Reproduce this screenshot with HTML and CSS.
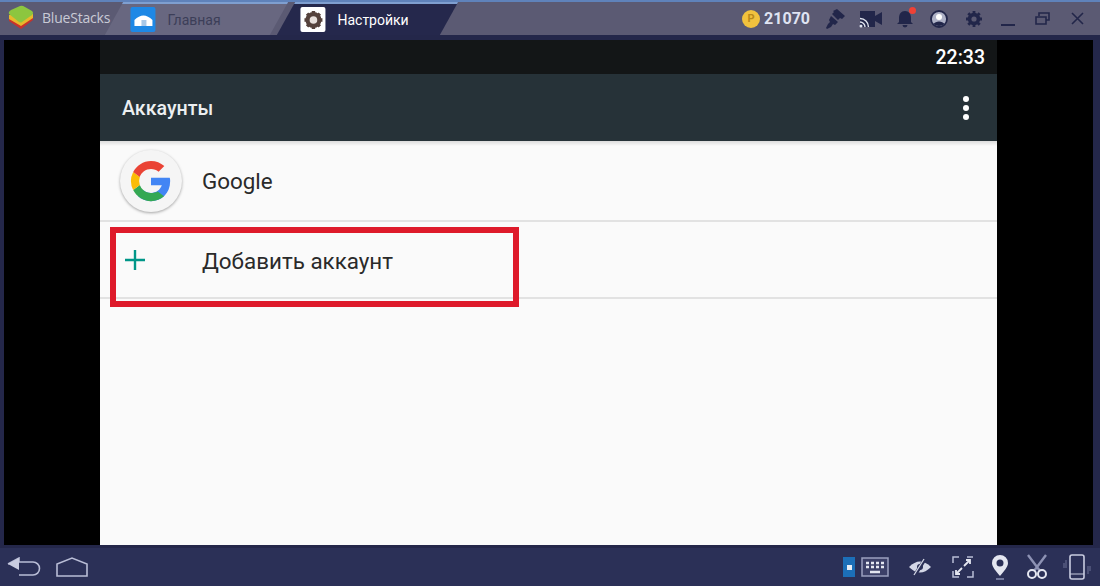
FILE: index.html
```html
<!DOCTYPE html>
<html lang="ru">
<head>
    <meta charset="UTF-8">
    <title>BlueStacks - Настройки</title>
    <link rel="stylesheet" href="styles.css">
</head>
<body>
    <div class="window">
        <!-- Шапка окна -->
        <header class="titlebar">
            <div class="brand">
                <svg class="brand-logo" width="28" height="26" viewBox="0 0 28 26">
                    <path d="M2 13 L2 17 L14 25 L26 16 L26 12 Z" fill="#c8332b"/>
                    <path d="M2 11 L2 15 L14 22 L26 14 L26 10 Z" fill="#e8b92c"/>
                    <path d="M2 10 Q1 8 4 6 L13 2 Q15 1 18 3 L25 7 Q27 9 25 11 L15 18 Q14 19 12 18 Z" fill="#8cc63f"/>
                </svg>
                <span class="brand-name">BlueStacks</span>
            </div>
            <div class="tab">
                <div class="tab-inner">
                    <span class="tab-icon tab-icon-home">
                        <svg width="24" height="24" viewBox="0 0 24 24">
                            <path d="M3 12 Q12 3 21 12 L21 18 L3 18 Z" fill="#fff"/>
                            <rect x="10" y="12" width="5" height="6" fill="#a8c8e8"/>
                        </svg>
                    </span>
                    <span class="tab-label">Главная</span>
                </div>
            </div>
            <div class="tab tab-active">
                <div class="tab-inner">
                    <span class="tab-icon tab-icon-gear">
                        <svg width="20" height="20" viewBox="0 0 20 20">
                            <circle cx="10" cy="10" r="6" fill="none" stroke="#55423c" stroke-width="4"/>
                            <path d="M10 1v18M1 10h18M3.600 3.600l12.800 12.800M16.400 3.600L3.600 16.400" stroke="#55423c" stroke-width="3.400"/>
                            <circle cx="10" cy="10" r="3.800" fill="#e8e0dc"/>
                        </svg>
                    </span>
                    <span class="tab-label">Настройки</span>
                </div>
            </div>
            <div class="toolbar">
                <span class="coin">P</span>
                <span class="coins">21070</span>
                <svg class="tool tool-brush" width="20" height="20" viewBox="0 0 20 20"><path d="M12 0l8 7-3 3-2-1-2 2-6-6 2-2-1-1zM6 7l7 6-3 3-2-1-2 3-4 2-1-1 2-4 2-2-1-2z" fill="#22264a"/></svg>
                <svg class="tool tool-cam" width="24" height="18" viewBox="0 0 24 18"><path d="M1 1h15v5l7-4v13l-7-4v6H1z" fill="#22264a"/><path d="M1 12a5 5 0 0 1 5 5M1 8.500a8.500 8.500 0 0 1 8.500 8.500" fill="none" stroke="#dfe3ee" stroke-width="1.400"/><circle cx="2" cy="16" r="1.500" fill="#dfe3ee"/></svg>
                <span class="bell">
                    <svg width="18" height="20" viewBox="0 0 18 20"><path d="M9 2c4 0 6 3 6 7v4l2 2H1l2-2V9c0-4 2-7 6-7zM6.500 16h5a2.500 2.500 0 0 1-5 0z" fill="#22264a"/></svg>
                    <i class="bell-dot"></i>
                </span>
                <svg class="tool tool-user" width="18" height="18" viewBox="0 0 18 18"><circle cx="9" cy="9" r="8" fill="#aeb1c6" stroke="#22264a" stroke-width="1.800"/><circle cx="9" cy="7" r="3" fill="#fff"/><path d="M3.500 14c2-3.500 9-3.500 11 0-3 2.500-8 2.500-11 0z" fill="#22264a"/></svg>
                <svg class="tool tool-gear" width="18" height="18" viewBox="0 0 18 18"><circle cx="9" cy="9" r="4.500" fill="none" stroke="#22264a" stroke-width="3.500"/><path d="M9 1v16M1 9h16M3.300 3.300l11.400 11.400M14.700 3.300L3.300 14.700" stroke="#22264a" stroke-width="2.800"/><circle cx="9" cy="9" r="2.600" fill="#5b5a73"/></svg>
                <svg class="tool tool-min" width="14" height="18" viewBox="0 0 14 18"><path d="M0 15h14" stroke="#22264a" stroke-width="2"/></svg>
                <svg class="tool tool-restore" width="15" height="13" viewBox="0 0 15 13"><path d="M4 4V1h10v7h-3M1 5h10v7H1z" fill="none" stroke="#22264a" stroke-width="1.600"/></svg>
                <svg class="tool tool-close" width="13" height="13" viewBox="0 0 13 13"><path d="M1 1l11 11M12 1L1 12" stroke="#22264a" stroke-width="1.600"/></svg>
            </div>
        </header>

        <!-- Экран -->
        <main class="screen">
            <div class="app">
                <div class="statusbar"><span class="clock">22:33</span></div>
                <div class="appbar">
                    <h1 class="appbar-title">Аккаунты</h1>
                    <div class="menu-dots"><i></i><i></i><i></i></div>
                </div>
                <div class="list">
                    <div class="row row-google">
                        <span class="avatar">
                            <svg width="46" height="46" viewBox="0 0 48 48">
                                <path d="M43.600 20.500H24v8h11.300C33.700 33.200 29.300 36.500 24 36.500c-3 0-5.700-1.100-7.800-2.900l-6 6C14 43.100 18.700 45 24 45c11 0 20-8 20-21 0-1.200-.1-2.400-.4-3.500z" fill="#4285f4"/>
                                <path d="M16.200 33.600A12.500 12.500 0 0 1 12.300 28.100l-6.900 5.300C8.800 40 15.900 45 24 45c5.300 0 10-1.800 13.600-5l-6.500-5.100c-2 1-4.400 1.600-7.100 1.600-3 0-5.700-1.100-7.800-2.900z" fill="#34a853"/>
                                <path d="M12.300 28.100A12.500 12.500 0 0 1 12.300 19.900l-6.900-5.300a21 21 0 0 0 0 18.800z" fill="#fbbc05"/>
                                <path d="M5.400 14.600l6.900 5.300C13.900 15 18.500 11.500 24 11.500c3 0 5.800 1.100 7.900 2.900l6-6C34 5 29.300 3 24 3 15.900 3 8.800 8 5.400 14.600z" fill="#ea4335"/>
                            </svg>
                        </span>
                        <span class="row-text">Google</span>
                    </div>
                    <div class="row row-add">
                        <svg class="plus" width="22" height="22" viewBox="0 0 22 22"><path d="M11 1v20M1 11h20" stroke="#009688" stroke-width="2.400"/></svg>
                        <span class="row-text">Добавить аккаунт</span>
                    </div>
                </div>
                <div class="highlight"></div>
            </div>
        </main>

        <!-- Нижняя панель -->
        <footer class="navbar">
            <div class="nav-left">
                <svg width="34" height="20" viewBox="0 0 34 20"><path d="M1 7l11-6v4h14a6.500 6.500 0 0 1 0 13H12" fill="none" stroke="#b9bdd6" stroke-width="1.600"/><path d="M1 7l11-6v12z" fill="#c9cce0"/></svg>
                <svg width="32" height="20" viewBox="0 0 32 20"><path d="M1 19V7L16 1l15 6v12z" fill="none" stroke="#b9bdd6" stroke-width="1.600"/></svg>
            </div>
            <div class="nav-right">
                <span class="kbd-lang"><i></i></span>
                <svg class="kbd" width="28" height="20" viewBox="0 0 28 20"><rect x="1" y="1" width="26" height="18" fill="#3c4068" stroke="#9a9fbe" stroke-width="1.500"/><path d="M5 6h3M10 6h3M15 6h3M20 6h3M5 10h3M10 10h3M15 10h3M20 10h3M9 15h10" stroke="#e4e6f0" stroke-width="2.500"/></svg>
                <svg class="nav-wide" width="24" height="18" viewBox="0 0 24 18"><path d="M1 9q11-11 22 0q-11 11-22 0z" fill="#d4d7e6"/><circle cx="12" cy="9" r="3" fill="#2b3057"/><path d="M17 1L7 17" stroke="#2b3057" stroke-width="3.500"/><path d="M16 1L6 17" stroke="#d4d7e6" stroke-width="1.300"/></svg>
                <svg class="nav-wide" width="24" height="24" viewBox="0 0 24 24"><path d="M8 2H2v6M16 2h6M2 16v6h6M22 16v6h-6" fill="none" stroke="#b9bdd6" stroke-width="1.500"/><path d="M13 11l6-6M15 5h4v4M11 13l-6 6M9 19H5v-4" fill="none" stroke="#e4e6f0" stroke-width="1.800"/></svg>
                <svg class="nav-tight" width="18" height="26" viewBox="0 0 18 26"><path fill-rule="evenodd" d="M9 1a8 8 0 0 1 8 8c0 4-4 8-8 13-4-5-8-9-8-13a8 8 0 0 1 8-8zm0 4.500a3.500 3.500 0 1 0 0 7 3.500 3.500 0 0 0 0-7z" fill="#e4e6f0"/><path d="M5 25h8" stroke="#8d92b4" stroke-width="1.500"/></svg>
                <svg width="22" height="26" viewBox="0 0 22 26"><path d="M2 1l12 16M20 1L8 17" stroke="#8d92b4" stroke-width="2.400"/><circle cx="6" cy="20" r="4" fill="none" stroke="#e4e6f0" stroke-width="2"/><circle cx="16" cy="20" r="4" fill="none" stroke="#e4e6f0" stroke-width="2"/></svg>
                <svg class="nav-phone" width="28" height="28" viewBox="0 0 28 28"><rect x="7" y="2" width="14" height="24" rx="2" fill="none" stroke="#c9cce0" stroke-width="1.600"/><path d="M7 21h14" stroke="#c9cce0" stroke-width="1"/><path d="M3 7v8M25 13v8M1 10v5M27 13v5" stroke="#6d7196" stroke-width="1"/></svg>
            </div>
        </footer>
    </div>
</body>
</html>
```

FILE: styles.css
```css
* {
    margin: 0;
    padding: 0;
    box-sizing: border-box;
}

body {
    width: 1100px;
    height: 586px;
    overflow: hidden;
    background: #2b3057;
    font-family: 'Roboto', 'Liberation Sans', sans-serif;
}

.window {
    display: flex;
    flex-direction: column;
    height: 586px;
}

/* Шапка окна */
.titlebar {
    height: 40px;
    flex: none;
    display: flex;
    align-items: flex-start;
    background: #5b5a73;
    border-top: 2px solid #5f82ba;
    border-bottom: 5px solid #24274a;
    color: #fff;
}

.brand {
    width: 114px;
    height: 33px;
    flex: none;
    display: flex;
    align-items: center;
    padding: 0 0 3px 7px;
    gap: 7px;
}

.brand-logo {
    flex: none;
}

.brand-name {
    font-family: 'Open Sans', sans-serif;
    font-size: 14px;
    color: #c9cad6;
    letter-spacing: -.2px;
    white-space: nowrap;
}

.tab {
    width: 165px;
    height: 33px;
    flex: none;
    transform: skewX(-29deg);
    background: #686780;
    border-top: 2px solid #7f9fd0;
}

.tab-active {
    margin-left: 7px;
    width: 163px;
    background: #25284c;
}

.tab-inner {
    height: 100%;
    display: flex;
    align-items: center;
    padding-left: 17px;
    gap: 12px;
    transform: skewX(29deg);
}

.tab-active .tab-inner {
    padding-left: 15px;
}

.tab-icon {
    width: 25px;
    height: 25px;
    border-radius: 2px;
    display: flex;
    align-items: center;
    justify-content: center;
    flex: none;
}

.tab-icon-home {
    background: #1e88e5;
}

.tab-icon-gear {
    background: #fff;
}

.tab-label {
    font-size: 14px;
    color: #3c3e58;
}

.tab-active .tab-label {
    color: #fff;
}

.toolbar {
    margin-left: auto;
    height: 33px;
    display: flex;
    align-items: center;
    padding-right: 16px;
}

.coin {
    width: 18px;
    height: 18px;
    border-radius: 50%;
    background: #f2c23e;
    color: #b98a1a;
    font-size: 11px;
    font-weight: 700;
    text-align: center;
    line-height: 18px;
}

.coins {
    margin-left: 4px;
    font-size: 16px;
    font-weight: 700;
    color: #dfe3f2;
}

.tool {
    flex: none;
}

.tool-brush {
    margin-left: 15px;
}

.tool-cam {
    margin-left: 14px;
}

.bell {
    position: relative;
    display: flex;
    margin-left: 13px;
}

.bell-dot {
    position: absolute;
    top: -2px;
    right: -2px;
    width: 7px;
    height: 7px;
    border-radius: 50%;
    background: #ef4136;
}

.tool-user {
    margin-left: 16px;
}

.tool-gear {
    margin-left: 17px;
}

.tool-min {
    margin-left: 18px;
}

.tool-restore {
    margin-left: 20px;
}

.tool-close {
    margin-left: 21px;
}

/* Экран */
.screen {
    flex: 1;
    padding: 0 7px 3px 4px;
    background: #24274a;
}

.app {
    position: relative;
    height: 100%;
    background: #000;
    padding: 0 96px;
    display: flex;
    flex-direction: column;
}

.statusbar {
    height: 34px;
    flex: none;
    display: flex;
    align-items: center;
    justify-content: flex-end;
    padding-right: 12px;
    background: #131617;
}

.clock {
    font-size: 19.500px;
    font-weight: 500;
    color: #fff;
}

.appbar {
    height: 67px;
    flex: none;
    display: flex;
    align-items: center;
    justify-content: space-between;
    padding: 0 28px 0 22px;
    background: #263238;
}

.appbar-title {
    padding-top: 2px;
    font-size: 19.600px;
    font-weight: 500;
    color: #eceff1;
}

.menu-dots {
    display: flex;
    flex-direction: column;
    gap: 3px;
}

.menu-dots i {
    width: 6px;
    height: 6px;
    border-radius: 50%;
    background: #fff;
}

.list {
    flex: 1;
    background: linear-gradient(#dcdcdc, #fafafa 5px);
}

.row {
    display: flex;
    align-items: center;
    border-bottom: 2px solid #e2e2e2;
}

.row-google {
    height: 81px;
    padding-left: 20px;
}

.row-add {
    height: 77px;
    padding: 2px 0 0 24px;
}

.avatar {
    width: 62px;
    height: 62px;
    margin-right: 20px;
    border-radius: 50%;
    background: #f5f5f5;
    box-shadow: 0 1px 3px rgba(0,0,0,0.35);
    display: flex;
    align-items: center;
    justify-content: center;
}

.plus {
    margin: -2px 56px 0 0;
}

.row-text {
    font-size: 22.400px;
    color: #2a2a2a;
}

/* Красная рамка поверх списка */
.highlight {
    position: absolute;
    left: 106px;
    top: 187px;
    width: 409px;
    height: 80px;
    border: 6px solid #de1a2a;
}

/* Нижняя панель */
.navbar {
    height: 38px;
    flex: none;
    display: flex;
    align-items: center;
    justify-content: space-between;
    background: #2b3057;
}

.nav-left {
    display: flex;
    align-items: center;
    gap: 15px;
    padding-left: 7px;
}

.nav-right {
    display: flex;
    align-items: center;
    gap: 17px;
    padding-right: 9px;
}

.nav-wide {
    margin-left: 2px;
}

.nav-tight {
    margin-left: -1px;
}

.nav-phone {
    margin-left: -2px;
}

.kbd-lang {
    width: 12px;
    height: 20px;
    margin-right: -11px;
    background: #1c6fb8;
    display: flex;
    align-items: center;
    justify-content: center;
}

.kbd-lang i {
    width: 5px;
    height: 5px;
    background: #e8eef6;
}
```
